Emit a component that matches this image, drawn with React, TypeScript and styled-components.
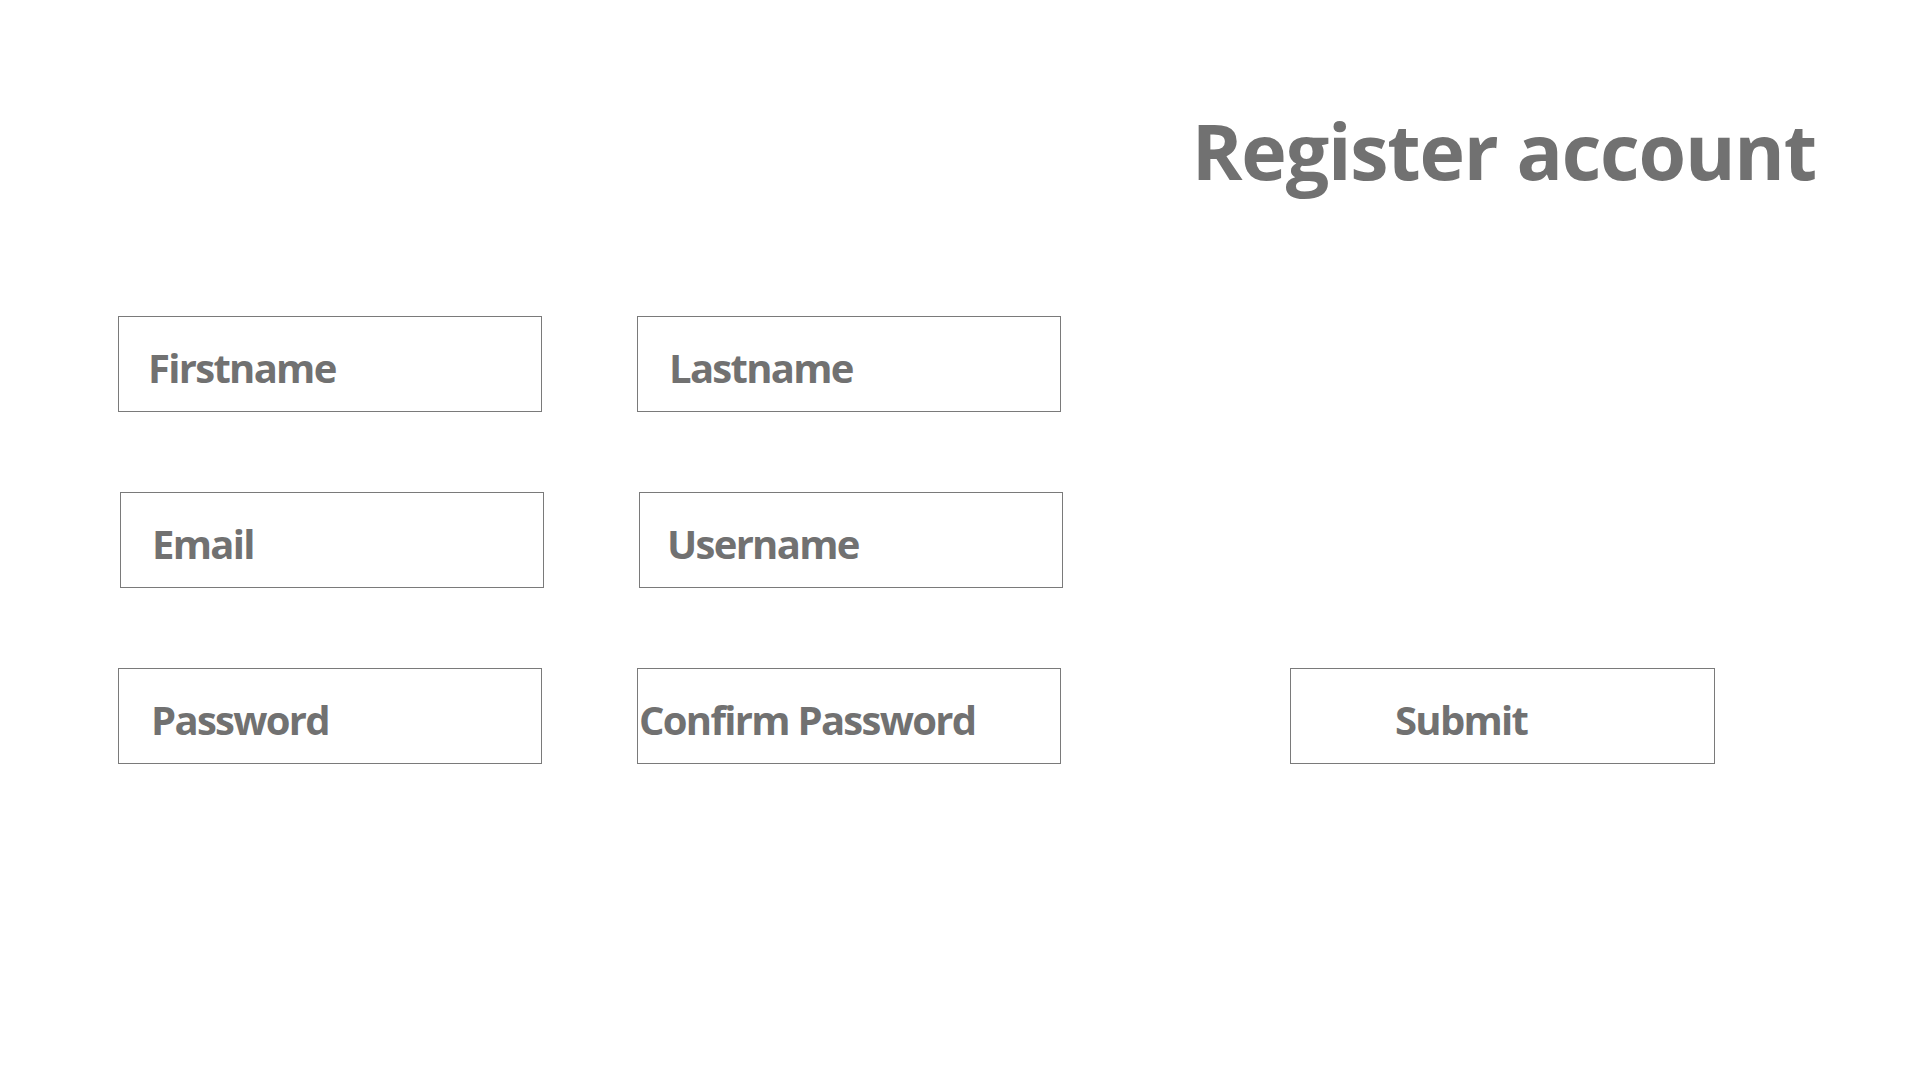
import React from "react";
import styled, { createGlobalStyle } from "styled-components";

const Global = createGlobalStyle`
  html, body { margin: 0; padding: 0; background: #ffffff; }
  body { font-family: "Open Sans", "Noto Sans", sans-serif; color: #717171; }
  * { box-sizing: border-box; }
`;

const Page = styled.div`
  width: 1920px;
  height: 1080px;
  display: flex;
  flex-direction: column;
  padding: 101px 0 0 0;
`;

const Header = styled.header`
  display: flex;
  justify-content: flex-end;
  padding-right: 104px;
`;

const Title = styled.h1`
  margin: 0;
  font-size: 77px;
  font-weight: 700;
  line-height: 100px;
  color: #717171;
  letter-spacing: -1.2px;
`;

const Form = styled.form`
  display: flex;
  flex-direction: column;
  gap: 80px;
  margin-top: 115px;
`;

const Row = styled.div<{ $offset: number }>`
  display: flex;
  align-items: center;
  padding-left: ${(p) => p.$offset}px;
`;

const Field = styled.div<{ $pad: number; $gapBefore?: number }>`
  width: 424px;
  height: 96px;
  border: 1.5px solid #7a7a7a;
  display: flex;
  align-items: center;
  padding-left: ${(p) => p.$pad}px;
  padding-top: 6px;
  margin-left: ${(p) => p.$gapBefore ?? 0}px;
  font-size: 40px;
  font-weight: 700;
  color: #717171;
  letter-spacing: -1.7px;
  white-space: nowrap;
`;

const SubmitButton = styled.button<{ $gapBefore: number }>`
  width: 425px;
  height: 96px;
  border: 1.5px solid #7a7a7a;
  background: #ffffff;
  display: flex;
  align-items: center;
  padding: 6px 0 0 104px;
  margin-left: ${(p) => p.$gapBefore}px;
  font-family: "Open Sans", "Noto Sans", sans-serif;
  font-size: 40px;
  font-weight: 700;
  color: #717171;
  letter-spacing: -1.7px;
  cursor: pointer;
`;

export default function App() {
  return (
    <>
      <Global />
      <Page>
        <Header>
          <Title>Register account</Title>
        </Header>
        <Form onSubmit={(e) => e.preventDefault()}>
          <Row $offset={118}>
            <Field $pad={29}>Firstname</Field>
            <Field $pad={31} $gapBefore={95}>Lastname</Field>
          </Row>
          <Row $offset={120}>
            <Field $pad={31}>Email</Field>
            <Field $pad={27} $gapBefore={95}>Username</Field>
          </Row>
          <Row $offset={118}>
            <Field $pad={32}>Password</Field>
            <Field $pad={1} $gapBefore={95}>Confirm Password</Field>
            <SubmitButton type="submit" $gapBefore={229}>Submit</SubmitButton>
          </Row>
        </Form>
      </Page>
    </>
  );
}
